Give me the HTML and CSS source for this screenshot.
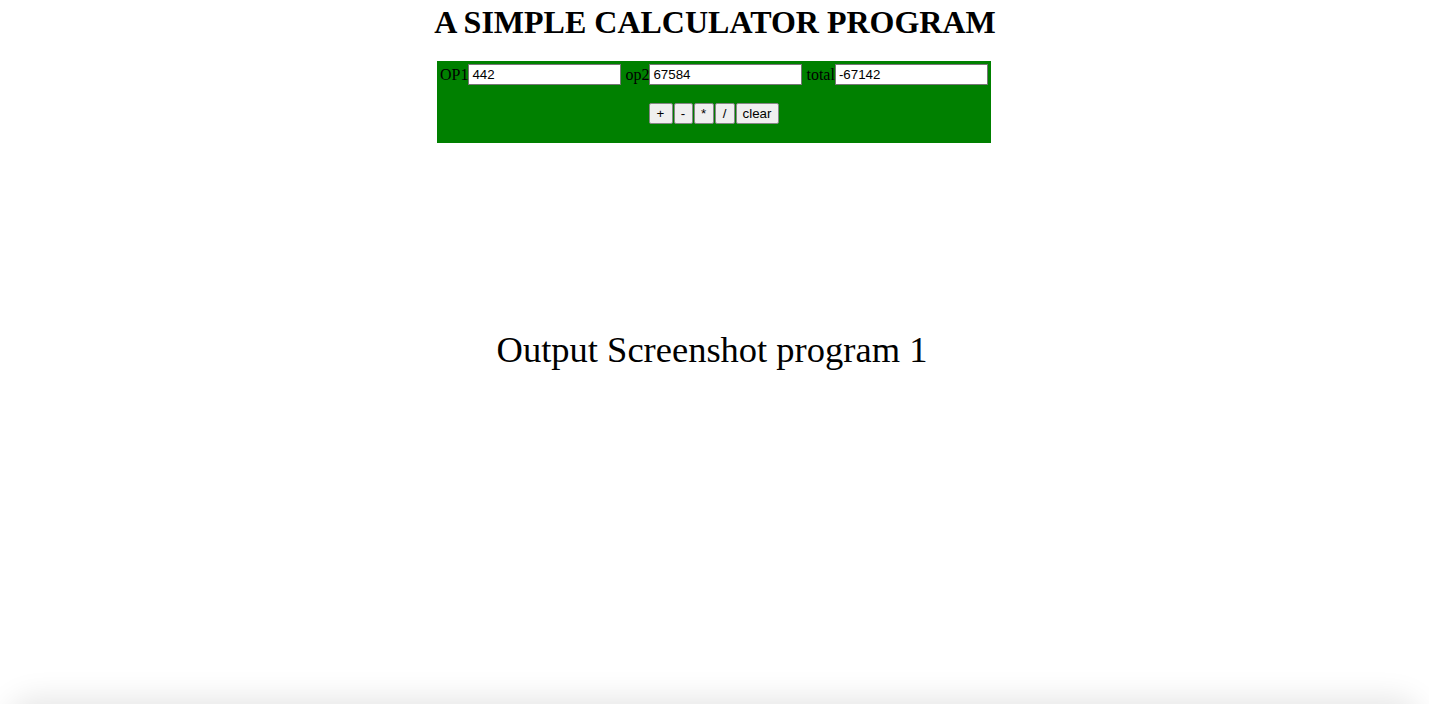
FILE: index.html
```html
<!DOCTYPE html>
<html>
<head>
<meta charset="utf-8">
<title>Calculator</title>
<link rel="stylesheet" href="styles.css">
</head>
<body>
<div class="page">
  <h1 class="title">A SIMPLE CALCULATOR PROGRAM</h1>
  <form class="calc">
    <div class="fields">
      <label class="lbl">OP1</label><input class="num" type="text" value="442">
      <label class="lbl gap">op2</label><input class="num" type="text" value="67584">
      <label class="lbl gap">total</label><input class="num" type="text" value="-67142">
    </div>
    <div class="buttons">
      <button type="button" class="btn b-plus">+</button>
      <button type="button" class="btn b-minus">-</button>
      <button type="button" class="btn b-mul">*</button>
      <button type="button" class="btn b-div">/</button>
      <button type="button" class="btn b-clear">clear</button>
    </div>
  </form>
  <p class="caption">Output Screenshot program 1</p>
</div>
<div class="shadow-wrap"><div class="shadow"></div></div>
</body>
</html>
```
FILE: styles.css
```css
html, body {
  margin: 0;
  padding: 0;
  background: #ffffff;
  height: 100%;
  overflow: hidden;
}
body {
  font-family: "Liberation Serif", "Times New Roman", serif;
  color: #000;
  position: relative;
}
.page {
  display: flex;
  flex-direction: column;
  align-items: center;
  padding-right: 1px;
}
.title {
  margin: 4px 0 0 0;
  font-size: 32px;
  font-weight: bold;
  line-height: 37px;
  padding-left: 2px;
}
.calc {
  margin: 20px 0 0 0;
  width: 554px;
  box-sizing: border-box;
  background: #008000;
  padding: 3px 3px 19px 3px;
  display: flex;
  flex-direction: column;
  align-items: center;
  gap: 18px;
}
.fields {
  display: flex;
  align-items: center;
  width: 100%;
  font-size: 16px;
  height: 21px;
}
.lbl {
  font-family: "Liberation Serif", "Times New Roman", serif;
  font-size: 16px;
  line-height: 21px;
}
.gap {
  margin-left: 4px;
}
.num {
  box-sizing: border-box;
  width: 153px;
  height: 21px;
  margin: 0;
  padding: 1px 3px;
  border: 1px solid #767676;
  background: #fff;
  font-family: "Liberation Sans", Arial, sans-serif;
  font-size: 13.33px;
  color: #000;
  outline: none;
}
.buttons {
  display: flex;
  gap: 1px;
  height: 21px;
  margin-right: 1px;
}
.btn {
  box-sizing: border-box;
  height: 21px;
  margin: 0;
  padding: 0;
  border: 1px solid #858585;
  border-radius: 2px;
  background: #efefef;
  font-family: "Liberation Sans", Arial, sans-serif;
  font-size: 13.33px;
  color: #000;
  line-height: 19px;
}
.b-plus { width: 24px; }
.b-minus { width: 19px; }
.b-mul { width: 20px; }
.b-div { width: 20px; }
.b-clear { width: 43px; }
.caption {
  margin: 186px 0 0 0;
  font-size: 36.5px;
  line-height: 41px;
  padding-right: 4px;
}
.shadow-wrap {
  position: absolute;
  left: 0;
  right: 0;
  bottom: 0;
  height: 44px;
  overflow: hidden;
}
.shadow {
  margin: 44px 14px 0 14px;
  height: 40px;
  border-radius: 24px;
  background: #fff;
  box-shadow: 0 0 30px 6px rgba(0, 0, 0, 0.10);
}
```
